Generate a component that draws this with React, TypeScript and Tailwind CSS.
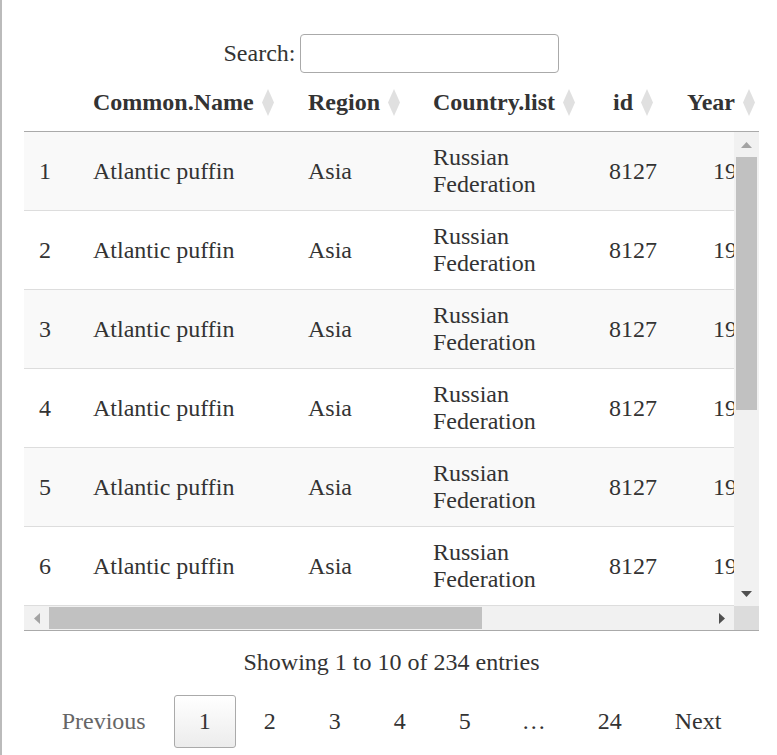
import React from "react";

const rows = [1, 2, 3, 4, 5, 6].map((n) => ({
  n,
  name: "Atlantic puffin",
  region: "Asia",
  country: "Russian Federation",
  id: "8127",
  year: "1970",
}));

const headers = [
  { label: "", w: "w-[54px]" },
  { label: "Common.Name", w: "w-[215px]" },
  { label: "Region", w: "w-[125px]" },
  { label: "Country.list", w: "w-[180px]" },
  { label: "id", w: "w-[74px]" },
  { label: "Year", w: "w-[104px]" },
];

function SortIcon() {
  return (
    <svg width="12" height="27" viewBox="0 0 12 27" className="ml-[8px] shrink-0">
      <polygon points="6,0 12,13.5 6,27 0,13.5" fill="#e0e0e0" />
    </svg>
  );
}

export default function App() {
  return (
    <div className="min-h-screen bg-white border-l-2 border-[#bbb] font-['Liberation_Serif',serif] text-[24px] leading-[27px] text-[#333]">
      <div className="ml-[22px] w-[735px] pt-[34px]">
        {/* search */}
        <div className="flex justify-center items-center h-[39px]">
          <label>Search:</label>
          <input className="ml-[5px] w-[259px] h-[39px] border border-[#aaa] rounded-[4px] outline-none px-2" />
        </div>

        {/* header */}
        <div className="mt-[6px] overflow-hidden border-b border-[#aaa]">
          <div className="flex w-[752px]">
            {headers.map((h) => (
              <div key={h.label} className={`${h.w} shrink-0 pl-[15px] pt-[10px] pb-[15px] flex items-center font-bold`}>
                {h.label && (
                  <>
                    <span>{h.label}</span>
                    <SortIcon />
                  </>
                )}
              </div>
            ))}
          </div>
        </div>

        {/* body + vertical scrollbar */}
        <div className="flex h-[474px]">
          <div className="w-[710px] overflow-hidden">
            {rows.map((r) => (
              <div
                key={r.n}
                className={`flex w-[752px] h-[79px] border-b border-[#ddd] ${r.n % 2 ? "bg-[#f9f9f9]" : "bg-white"}`}
              >
                <div className="w-[54px] shrink-0 px-[15px] flex items-center">{r.n}</div>
                <div className="w-[215px] shrink-0 px-[15px] flex items-center">{r.name}</div>
                <div className="w-[125px] shrink-0 px-[15px] flex items-center">{r.region}</div>
                <div className="w-[180px] shrink-0 px-[15px] flex items-center">{r.country}</div>
                <div className="w-[74px] shrink-0 px-[15px] flex items-center justify-end">{r.id}</div>
                <div className="w-[104px] shrink-0 px-[15px] flex items-center justify-end">{r.year}</div>
              </div>
            ))}
          </div>
          <div className="w-[25px] bg-[#f1f1f1] flex flex-col items-center">
            <div className="h-[25px] flex items-center justify-center">
              <svg width="11" height="6" viewBox="0 0 11 6">
                <polygon points="5.5,0 11,6 0,6" fill="#a3a3a3" />
              </svg>
            </div>
            <div className="w-[21px] h-[253px] bg-[#c1c1c1]" />
            <div className="flex-1" />
            <div className="h-[25px] flex items-center justify-center">
              <svg width="11" height="6" viewBox="0 0 11 6">
                <polygon points="0,0 11,0 5.5,6" fill="#505050" />
              </svg>
            </div>
          </div>
        </div>

        {/* horizontal scrollbar */}
        <div className="flex h-[25px] border-b border-[#aaa]">
          <div className="w-[710px] bg-[#f1f1f1] flex items-center">
            <div className="w-[25px] flex justify-center">
              <svg width="6" height="11" viewBox="0 0 6 11">
                <polygon points="6,0 6,11 0,5.5" fill="#a3a3a3" />
              </svg>
            </div>
            <div className="w-[433px] h-[22px] bg-[#c1c1c1]" />
            <div className="flex-1" />
            <div className="w-[25px] flex justify-center">
              <svg width="6" height="11" viewBox="0 0 6 11">
                <polygon points="0,0 6,5.5 0,11" fill="#505050" />
              </svg>
            </div>
          </div>
          <div className="w-[25px] bg-[#dcdcdc]" />
        </div>

        {/* info */}
        <div className="pt-[18px] text-center">Showing 1 to 10 of 234 entries</div>

        {/* pagination */}
        <div className="mt-[19px] flex justify-center items-center">
          <span className="px-[24px] py-[12px] border border-transparent text-[#666]">Previous</span>
          <span className="ml-[3px] px-[24px] py-[12px] border border-[#aaa] rounded-[3px] bg-gradient-to-b from-white to-[#ececec]">1</span>
          {["2", "3", "4", "5"].map((p) => (
            <span key={p} className="ml-[3px] px-[24px] py-[12px] border border-transparent">{p}</span>
          ))}
          <span className="ml-[2px] px-[24px]">…</span>
          <span className="ml-[3px] px-[24px] py-[12px] border border-transparent">24</span>
          <span className="ml-[3px] px-[24px] py-[12px] border border-transparent">Next</span>
        </div>
      </div>
    </div>
  );
}
